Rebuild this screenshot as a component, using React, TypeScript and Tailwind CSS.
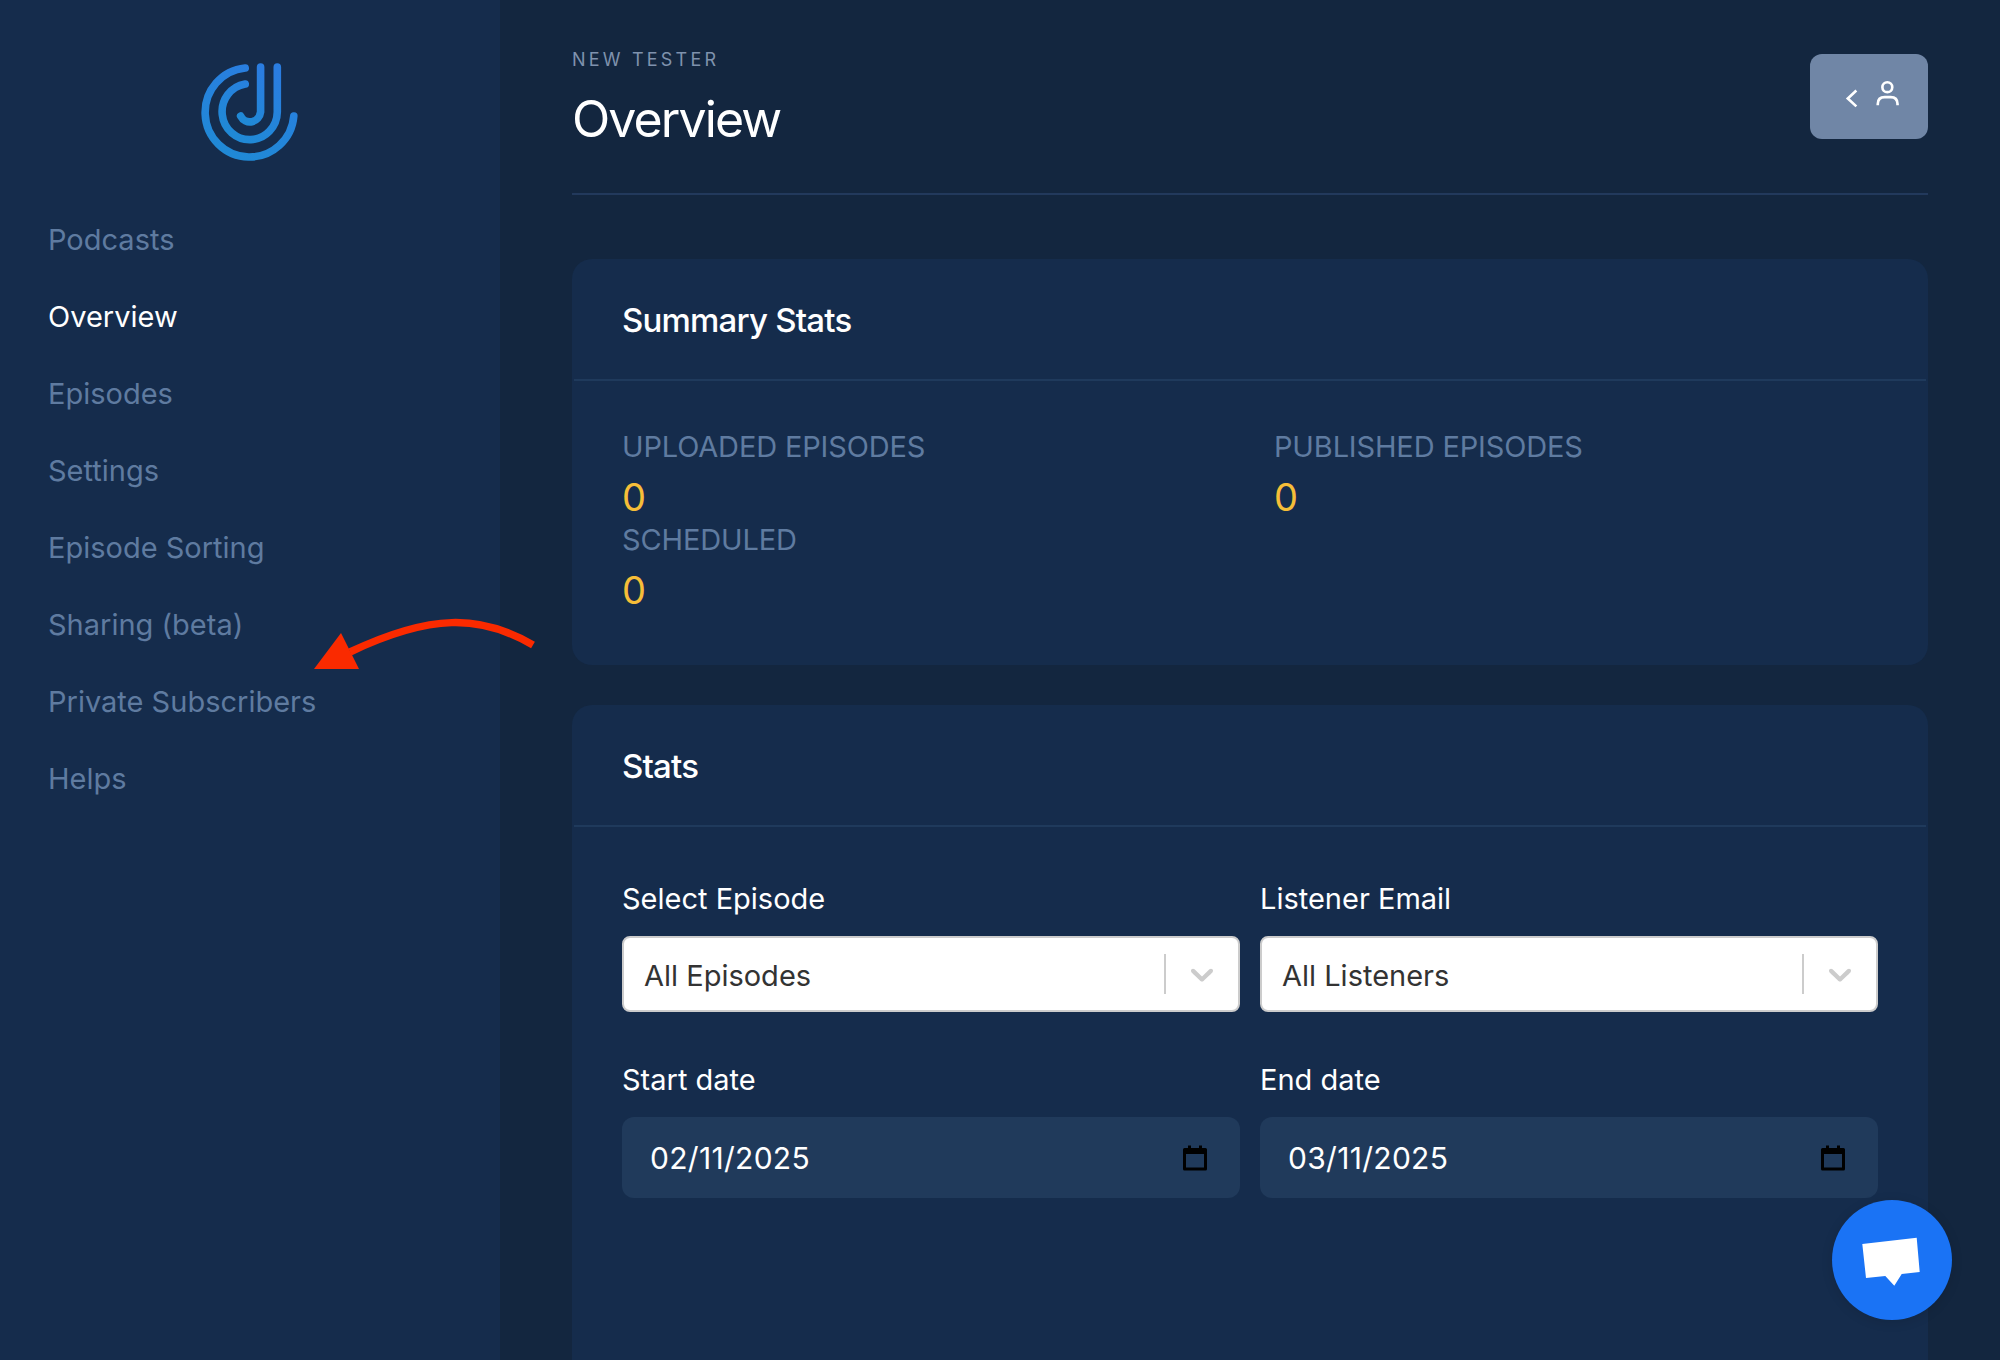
const navItems = [
  "Podcasts",
  "Overview",
  "Episodes",
  "Settings",
  "Episode Sorting",
  "Sharing (beta)",
  "Private Subscribers",
  "Helps",
];

function Logo() {
  return (
    <svg viewBox="0 0 107 104" className="h-[104px] w-[107px]" fill="none">
      <defs>
        <linearGradient id="logoBlue" x1="0.8" y1="0" x2="0.4" y2="1">
          <stop offset="0" stopColor="#2a7de1" />
          <stop offset="1" stopColor="#2089d6" />
        </linearGradient>
      </defs>
      <g stroke="url(#logoBlue)" strokeWidth="7.6" strokeLinecap="round" strokeLinejoin="round">
        <path d="M48.2 8 A44.4 44.6 0 1 0 96.8 56" />
        <path d="M48.2 24 A27.6 28 0 1 0 80.3 52 V7" />
        <path d="M63.6 7 V52 A10.7 11.3 0 0 1 43.6 56" />
      </g>
    </svg>
  );
}

function Stat({ label, value }: { label: string; value: string }) {
  return (
    <div>
      <p className="h-[44px] text-[29px] leading-[44px] tracking-[-0.15px] text-[#5f7ba0]">{label}</p>
      <p className="h-[49px] text-[38px] leading-[57px] text-[#f6be38]">{value}</p>
    </div>
  );
}

function SelectBox({ value, label }: { value: string; label: string }) {
  return (
    <div>
      <p className="mb-[17px] text-[29px] leading-[40px] text-white">{label}</p>
      <div className="flex h-[76px] items-center rounded-[8px] border-2 border-[#cccccc] bg-white pl-[20px]">
        <span className="flex-1 pt-[3px] text-[29px] text-[#333333]">{value}</span>
        <span className="h-[40px] w-[2px] bg-[#cccccc]" />
        <span className="flex w-[72px] justify-center">
          <svg viewBox="0 0 20 20" className="h-[38px] w-[38px] fill-[#cccccc]">
            <path d="M4.516 7.548c0.436-0.446 1.043-0.481 1.576 0l3.908 3.747 3.908-3.747c0.533-0.481 1.141-0.446 1.574 0 0.436 0.445 0.408 1.197 0 1.615-0.406 0.418-4.695 4.502-4.695 4.502-0.217 0.223-0.502 0.335-0.787 0.335s-0.57-0.112-0.789-0.335c0 0-4.287-4.084-4.695-4.502s-0.436-1.17 0-1.615z" />
          </svg>
        </span>
      </div>
    </div>
  );
}

function DateBox({ value, label }: { value: string; label: string }) {
  return (
    <div>
      <p className="mb-[17px] text-[29px] leading-[40px] text-white">{label}</p>
      <div className="flex h-[81px] items-center justify-between rounded-[12px] bg-[#203a5b] pl-[28px] pr-[33px]">
        <span className="pt-[1px] text-[30px] tracking-[0.3px] text-white">{value}</span>
        <svg viewBox="0 0 24 26" className="h-[26px] w-[24px]" fill="none">
          <path d="M5 0.5 H8 V3 H16 V0.5 H19 V3 H22.5 Q24 3 24 4.5 V24 Q24 25.5 22.5 25.5 H1.5 Q0 25.5 0 24 V4.5 Q0 3 1.5 3 H5 Z" fill="#000" />
          <rect x="3" y="9" width="18" height="13.5" fill="#203a5b" />
        </svg>
      </div>
    </div>
  );
}

export default function App() {
  return (
    <div className="relative flex h-[1360px] w-[2000px] overflow-hidden bg-[#13263f] font-['Inter',sans-serif]">
      {/* Sidebar */}
      <aside className="h-full w-[500px] shrink-0 bg-[#152c4c] pl-[48px]">
        <div className="flex h-[205px] items-start justify-center pt-[60px] pr-[48px]">
          <Logo />
        </div>
        <nav className="flex flex-col">
          {navItems.map((item) => (
            <a
              key={item}
              className={`h-[77px] text-[29px] leading-[70px] ${
                item === "Overview" ? "text-white" : "text-[#5f7ba0]"
              }`}
            >
              {item}
            </a>
          ))}
        </nav>
      </aside>

      {/* Main */}
      <main className="flex-1 px-[72px]">
        <header className="flex h-[195px] justify-between border-b-2 border-[#22395c] pt-[46px]">
          <div>
            <p className="text-[18px] leading-[28px] tracking-[3.2px] text-[#7f92ad]">NEW TESTER</p>
            <h1 className="mt-[14px] text-[50px] leading-[62px] tracking-[-1.9px] text-white">Overview</h1>
          </div>
          <button className="mt-[8px] flex h-[85px] w-[118px] items-center justify-center rounded-[12px] bg-[#7086a6] pb-[5px] pl-[6px]">
            <svg viewBox="250 180 170 85" className="h-[28px] w-[57px]" fill="none" stroke="#fff" strokeWidth="8">
              <path d="M286 212 L260 236 L286 260" />
              <circle cx="380" cy="202" r="15" />
              <path d="M351 257 V253 Q351 232 372 232 H390 Q411 232 411 253 V257" />
            </svg>
          </button>
        </header>

        <section className="mt-[64px] h-[406px] rounded-[20px] bg-[#152c4c]">
          <div className="mx-[2px] flex h-[122px] items-center border-b-2 border-[#1f3a5c] px-[48px] pt-[3px]">
            <h2 className="text-[33px] font-medium tracking-[-0.8px] text-white">Summary Stats</h2>
          </div>
          <div className="grid grid-cols-2 gap-x-[48px] px-[50px] pt-[44px]">
            <Stat label="UPLOADED EPISODES" value="0" />
            <Stat label="PUBLISHED EPISODES" value="0" />
            <Stat label="SCHEDULED" value="0" />
          </div>
        </section>

        <section className="mt-[40px] h-[700px] rounded-[20px] bg-[#152c4c]">
          <div className="mx-[2px] flex h-[122px] items-center border-b-2 border-[#1f3a5c] px-[48px] pt-[3px]">
            <h2 className="text-[33px] font-medium tracking-[-0.8px] text-white">Stats</h2>
          </div>
          <div className="grid grid-cols-2 gap-x-[20px] gap-y-[48px] px-[50px] pt-[52px]">
            <SelectBox label="Select Episode" value="All Episodes" />
            <SelectBox label="Listener Email" value="All Listeners" />
            <DateBox label="Start date" value="02/11/2025" />
            <DateBox label="End date" value="03/11/2025" />
          </div>
        </section>
      </main>

      {/* Annotation arrow */}
      <svg viewBox="0 0 2000 1360" className="pointer-events-none absolute inset-0 h-[1360px] w-[2000px]" fill="none">
        <path d="M533 645 C480 614 430 614 350 652" stroke="#fa2a00" strokeWidth="7.5" />
        <path d="M341 633 L314 669 L359 669 Z" fill="#fa2a00" />
      </svg>

      {/* Chat bubble */}
      <button className="absolute left-[1832px] top-[1200px] h-[120px] w-[120px] rounded-full bg-[#1a73f5] shadow-[0_2px_12px_rgba(0,0,0,0.12)]">
        <svg viewBox="0 0 120 120" className="h-[120px] w-[120px]">
          <path d="M30.3 44 L84.7 37.7 L87.7 72 L69.7 74 L62.3 85.7 L53.3 76 L34 78 Z" fill="#fff" />
        </svg>
      </button>
    </div>
  );
}
